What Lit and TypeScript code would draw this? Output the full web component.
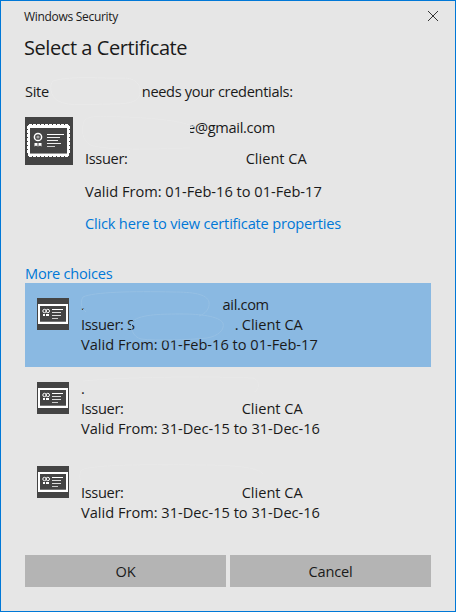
import { LitElement, html, css, svg } from "lit";
import { customElement } from "lit/decorators.js";

const bigIcon = html`<svg class="cert" width="48" height="48" viewBox="0 0 48 48" shape-rendering="crispEdges">
  <rect width="48" height="48" fill="#444444"/>
  <rect x="3" y="8" width="41" height="31" fill="#fff"/>
  ${[4,8,12,16,20,24,28,32,36,40].map(x => svg`<rect x=${x} y="7" width="3" height="1" fill="#fff"/><rect x=${x} y="39" width="3" height="1" fill="#fff"/>`)}
  ${[9,13,17,21,25,29,33].map(y => svg`<rect x="2" y=${y} width="1" height="3" fill="#fff"/><rect x="44" y=${y} width="1" height="3" fill="#fff"/>`)}
  <rect x="5" y="11" width="37" height="26" fill="#444444"/>
  <rect x="5" y="36" width="37" height="1" fill="#999"/>
  <circle cx="13" cy="20" r="3.6" fill="none" stroke="#fff" stroke-width="1.5" shape-rendering="auto"/>
  <circle cx="13" cy="20" r="1.6" fill="#aaa" shape-rendering="auto"/>
  <path d="M9.5 26h3v3.5l-1.5-1-1.5 1zM13.5 26h3v3.5l-1.5-1-1.5 1z" fill="#fff" shape-rendering="auto"/>
  <rect x="22" y="17" width="17" height="1" fill="#fff"/>
  <rect x="22" y="20" width="13" height="1" fill="#eee"/>
  <rect x="22" y="23" width="11" height="1" fill="#eee"/>
  <rect x="22" y="26" width="14" height="1" fill="#eee"/>
  <rect x="22" y="29" width="8" height="1" fill="#ccc"/>
</svg>`;

const smallIcon = html`<svg class="cert" width="32" height="32" viewBox="0 0 32 32" shape-rendering="crispEdges">
  <rect width="32" height="32" fill="#444444"/>
  <rect x="1" y="6" width="30" height="20" fill="#fff"/>
  <rect x="3" y="8" width="26" height="16" fill="#444444"/>
  <rect x="3" y="23" width="26" height="1" fill="#777"/>
  <circle cx="7.5" cy="13" r="1.7" fill="none" stroke="#fff" stroke-width="1" shape-rendering="auto"/>
  <circle cx="10.8" cy="13" r="1.7" fill="none" stroke="#fff" stroke-width="1" shape-rendering="auto"/>
  <path d="M6 16h2v2H6zM9 16h3v2H9z" fill="#fff"/>
  <rect x="15" y="11" width="11" height="1" fill="#fff"/>
  <rect x="15" y="14" width="9" height="1" fill="#ddd"/>
  <rect x="15" y="17" width="9" height="1" fill="#ddd"/>
  <rect x="15" y="20" width="6" height="1" fill="#ccc"/>
</svg>`;

const blobs = html`<svg class="blobs" width="454" height="610" viewBox="0 0 454 610" fill="none">
  <path d="M52 80c20-6 50-2 70-3 14 0 18 8 17 15-1 9-10 11-30 11-20 0-40 3-52-3-8-5-9-16-5-20z" stroke="#eaeaea" stroke-width="1"/>
  <path d="M83 120c4-6 20-5 40-4 30 1 60 4 70 10M83 120c-3 10-2 18 6 24 20 6 60 4 100 3" stroke="#e9e9e9" stroke-width="1"/>
  <path d="M82 296c10-5 50-6 90-5 20 0 34 2 36 10 1 7-4 12-10 14M82 296c-3 5-2 11 3 15" stroke="#96c0e4" stroke-width="1"/>
  <path d="M132 320c8-7 30-7 50-7 16 0 36 2 40 9 2 7-5 13-16 15-20 2-50 3-66 1-8-2-12-12-8-18z" stroke="#96c0e4" stroke-width="1"/>
  <path d="M82 380c40-4 120-5 170-3 6 2 8 8 2 14" stroke="#e9e9e9" stroke-width="1"/>
  <path d="M80 470c2-6 60-7 120-6 30 0 58 2 62 9M80 470c-3 6-1 12 6 16" stroke="#e9e9e9" stroke-width="1"/>
</svg>`;

@customElement("app-root")
export class AppRoot extends LitElement {
  static styles = css`
    :host { display: block; width: 456px; height: 612px; font-family: "Open Sans", "Noto Sans", sans-serif; color: #1a1a1a; }
    * { box-sizing: border-box; }
    .win { width: 456px; height: 612px; background: #e6e6e6; border: 1px solid #0078d7; display: flex; flex-direction: column; padding: 0 24px; position: relative; }
    .titlebar { height: 30px; display: flex; align-items: center; justify-content: space-between; margin: 0 -8px 0 -1px; font-size: 12px; letter-spacing: -0.3px; }
    .close { display: block; }
    h1 { margin: 0 0 0 -1px; height: 34px; line-height: 34px; font-size: 20px; font-weight: 400; letter-spacing: -0.43px; }
    .body { font-size: 14.6px; }
    .txt { letter-spacing: -0.33px; }
    .num { letter-spacing: 0; }
    .ca { letter-spacing: 0; }
    .site { margin-top: 16px; height: 20px; line-height: 20px; display: flex; }
    .site .gap { width: 93px; }
    .main { margin-top: 16px; display: flex; gap: 12px; }
    .main .cert { flex: none; }
    .main .l { height: 32px; line-height: 20px; white-space: nowrap; }
    .main .l.first { height: 31px; }
    .main .l.second { height: 33px; }
    .hide { display: inline-block; }
    .frag { display: inline-block; width: 5px; overflow: hidden; text-indent: -3px; vertical-align: bottom; }
    a { color: #0078d7; text-decoration: none; }
    a.prop { letter-spacing: -0.19px; }
    .more { margin-top: 18px; height: 20px; line-height: 20px; display: block; letter-spacing: -0.25px; }
    .item { height: 84px; padding: 15px 12px 0; display: flex; gap: 12px; }
    .item.sel { background: #8ab9e2; }
    .item .cert { flex: none; }
    .item .t { margin-top: -4px; line-height: 20px; }
    .item .l { height: 20px; white-space: nowrap; }
    .buttons { margin-top: 20px; display: flex; gap: 4px; }
    button { flex: 1; height: 32px; border: 0; background: #b4b4b4; font: inherit; color: #1a1a1a; letter-spacing: -0.2px; padding: 0; }
    .blobs { position: absolute; left: 0; top: 0; pointer-events: none; }
  `;

  private row(cls: string, first: unknown, issuer: unknown, dates: string) {
    return html`<div class="item ${cls}">
      ${smallIcon}
      <div class="t">
        <div class="l txt">${first}</div>
        <div class="l txt">${issuer}</div>
        <div class="l num">Valid From: ${dates}</div>
      </div>
    </div>`;
  }

  render() {
    const gap = html`<span class="hide" style="width:118px"></span><span class="ca">Client CA</span>`;
    return html`<div class="win">
      <div class="titlebar">
        <span>Windows Security</span>
        <svg class="close" width="12" height="12" viewBox="0 0 12 12"><path d="M1 1l10 10M11 1L1 11" stroke="#333" stroke-width="1" fill="none"/></svg>
      </div>
      <h1>Select a Certificate</h1>
      <div class="body">
        <div class="site txt"><span>Site</span><span class="gap"></span><span>needs your credentials:</span></div>
        <div class="main">
          ${bigIcon}
          <div class="lines">
            <div class="l first txt"><span class="hide" style="width:105px"></span><span class="frag">e</span>@gmail.com</div>
            <div class="l second txt">Issuer:<span class="hide" style="width:118px"></span><span class="ca">Client CA</span></div>
            <div class="l num">Valid From: 01-Feb-16 to 01-Feb-17</div>
            <div class="l"><a class="prop" href="#">Click here to view certificate properties</a></div>
          </div>
        </div>
        <a class="more" href="#">More choices</a>
        ${this.row("sel", html`.<span class="hide" style="width:138px"></span>ail.com`, html`Issuer: S<span class="hide" style="width:100px"></span>. <span class="ca">Client CA</span>`, "01-Feb-16 to 01-Feb-17")}
        ${this.row("plain", html`.`, html`Issuer:${gap}`, "31-Dec-15 to 31-Dec-16")}
        ${this.row("plain", html``, html`Issuer:${gap}`, "31-Dec-15 to 31-Dec-16")}
        <div class="buttons"><button>OK</button><button>Cancel</button></div>
      </div>
      ${blobs}
    </div>`;
  }
}
